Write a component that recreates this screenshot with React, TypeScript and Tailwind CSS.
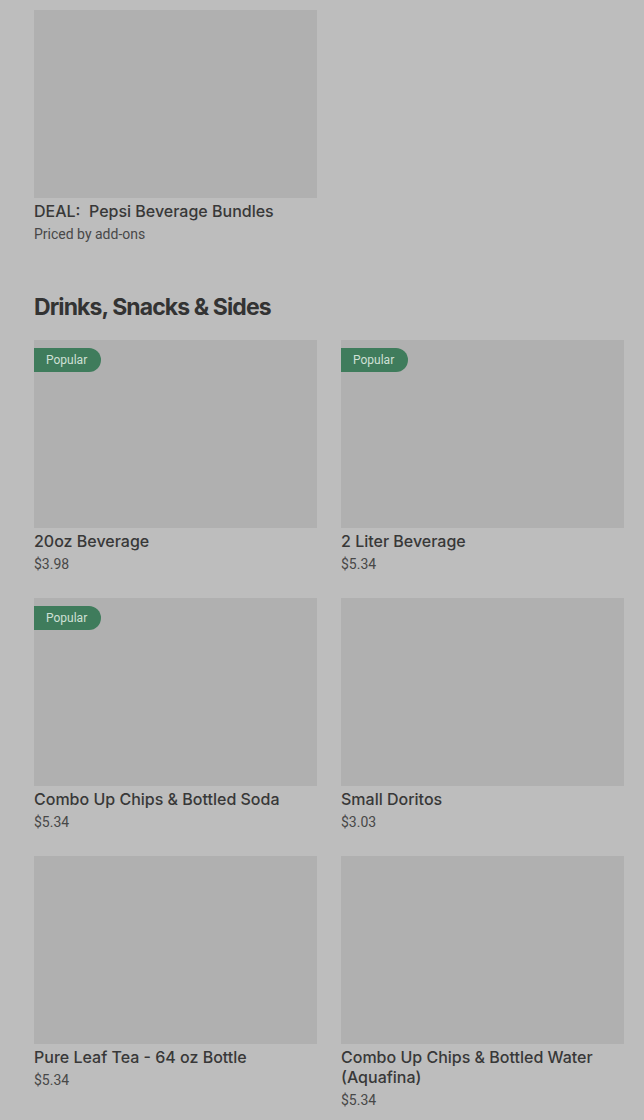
const items = [
  { name: '20oz Beverage', price: '$3.98', popular: true },
  { name: '2 Liter Beverage', price: '$5.34', popular: true },
  { name: 'Combo Up Chips & Bottled Soda', price: '$5.34', popular: true },
  { name: 'Small Doritos', price: '$3.03', popular: false },
  { name: 'Pure Leaf Tea - 64 oz Bottle', price: '$5.34', popular: false },
  { name: 'Combo Up Chips & Bottled Water (Aquafina)', price: '$5.34', popular: false },
];

function Card({ name, price, popular }: { name: string; price: string; popular?: boolean }) {
  return (
    <div className="flex flex-col">
      <div className="relative h-[188px] bg-[#b0b0b0]">
        {popular && (
          <span className="absolute left-0 top-[8px] h-[24px] flex items-center pl-3 pr-[14px] rounded-r-full bg-[#3f7c5c] text-[#cfe0d6] text-[12px]">
            Popular
          </span>
        )}
      </div>
      <p className="mt-[3px] text-[16px] leading-[20px] font-medium text-[#383838] font-['Inter',sans-serif]">{name}</p>
      <p className="mt-[4px] text-[14px] leading-[19px] text-[#484848]">{price}</p>
    </div>
  );
}

export default function App() {
  return (
    <div className="min-h-screen bg-[#bdbdbd] pl-[34px] pr-[20px] pt-[10px] font-['Roboto',sans-serif]">
      {/* deal */}
      <div className="grid grid-cols-2 gap-x-[24px]">
        <div className="flex flex-col">
          <div className="h-[188px] bg-[#b0b0b0]" />
          <p className="mt-[3px] text-[16px] leading-[20px] font-medium text-[#383838] whitespace-pre font-['Inter',sans-serif]">DEAL:  Pepsi Beverage Bundles</p>
          <p className="mt-[4px] text-[14px] leading-[19px] text-[#484848]">Priced by add-ons</p>
        </div>
      </div>

      <h2 className="mt-[48px] text-[23px] leading-[30px] font-bold tracking-[-0.9px] text-[#333] font-['Inter',sans-serif]">
        Drinks, Snacks &amp; Sides
      </h2>

      <div className="mt-[18px] grid grid-cols-2 gap-x-[24px] gap-y-[24px]">
        {items.map((it) => (
          <Card key={it.name} {...it} />
        ))}
      </div>
    </div>
  );
}
